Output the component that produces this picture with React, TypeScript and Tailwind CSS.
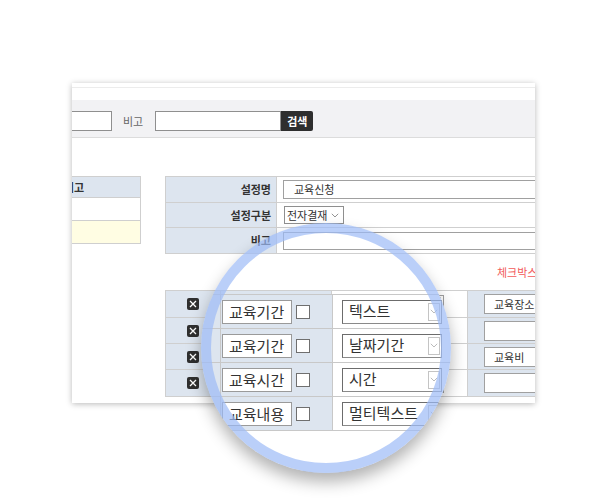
const font = { fontFamily: '"Noto Sans CJK KR", "Noto Sans", sans-serif' }

function XBox() {
  return (
    <span className="w-[12px] h-[12px] rounded-[2px] bg-[#2f2f2f] flex items-center justify-center">
      <svg width="8" height="8" viewBox="0 0 8 8">
        <path d="M1 1L7 7M7 1L1 7" stroke="#fff" strokeWidth="1.3" />
      </svg>
    </span>
  )
}

function Chevron({ size = 8, color = '#777' }: { size?: number; color?: string }) {
  return (
    <svg width={size} height={size * 0.6} viewBox="0 0 10 6">
      <path d="M1 1L5 5L9 1" stroke={color} strokeWidth="1" fill="none" />
    </svg>
  )
}

export default function App() {
  /* original rows under the lens */
  const rows = [
    { h: 'h-[27px]', right: '교육장소' },
    { h: 'h-[26px]', right: '' },
    { h: 'h-[26px]', right: '교육비' },
    { h: 'h-[27px]', right: '' },
  ]

  /* magnified rows */
  const zoomRows = [
    { label: '교육기간', sel: '텍스트' },
    { label: '교육기간', sel: '날짜기간' },
    { label: '교육시간', sel: '시간' },
    { label: '교육내용', sel: '멀티텍스트' },
  ]

  return (
    <div className="w-[600px] h-[500px] bg-white relative overflow-hidden text-[#333]" style={font}>
      {/* screenshot card */}
      <div className="ml-[72px] mt-[83px] w-[463px] h-[320px] bg-white overflow-hidden shadow-[0_1px_6px_rgba(0,0,0,0.28)] flex flex-col">
        <div className="h-[5px] border-b border-[#ececec] shrink-0" />
        <div className="h-[12px] shrink-0" />
        <div className="h-[38px] shrink-0 bg-[#f2f2f4] border-b border-[#dcdcdc] flex items-start pt-[11px] text-[11px]">
          <div className="w-[40px] h-[20px] bg-white border border-l-0 border-[#8f8f8f]" />
          <span className="ml-[11px] leading-[20px] text-[#666]">비고</span>
          <div className="ml-[12px] w-[126px] h-[20px] bg-white border border-[#8f8f8f]" />
          <button className="w-[32px] h-[20px] bg-[#2e2e2e] text-white font-bold text-[11px] leading-[20px] rounded-r-[2px]">
            검색
          </button>
        </div>

        <div className="flex items-start mt-[38px] text-[11px]">
          {/* left table */}
          <div className="w-[69px] border-r border-b border-[#cfcfcf] shrink-0">
            <div className="h-[22px] bg-[#dde5ef] border-t border-b border-[#cfcfcf] flex items-center font-bold overflow-hidden">
              <span className="ml-[-8px] whitespace-nowrap">비고</span>
            </div>
            <div className="h-[23px] bg-white border-b border-[#cfcfcf]" />
            <div className="h-[22px] bg-[#fffde3]" />
          </div>

          {/* right column */}
          <div className="ml-[24px] flex-1 min-w-0">
            <div className="border-t border-l border-[#cfcfcf]">
              <div className="flex h-[26px] border-b border-[#cfcfcf]">
                <div className="w-[111px] bg-[#dde5ef] border-r border-[#cfcfcf] flex items-center justify-end pr-[5px] font-bold">설정명</div>
                <div className="flex-1 flex items-center">
                  <div className="ml-[6px] flex-1 h-[19px] border border-r-0 border-[#a0a0a0] pl-[10px] leading-[17px]">교육신청</div>
                </div>
              </div>
              <div className="flex h-[25px] border-b border-[#cfcfcf]">
                <div className="w-[111px] bg-[#dde5ef] border-r border-[#cfcfcf] flex items-center justify-end pr-[5px] font-bold">설정구분</div>
                <div className="flex-1 flex items-center">
                  <div className="ml-[7px] w-[60px] h-[18px] border border-[#8f8f8f] flex items-center pl-[2px] gap-[4px] text-[11px]">
                    <span>전자결재</span>
                    <Chevron />
                  </div>
                </div>
              </div>
              <div className="flex h-[26px] border-b border-[#cfcfcf]">
                <div className="w-[111px] bg-[#dde5ef] border-r border-[#cfcfcf] flex items-center justify-end pr-[5px] font-bold">비고</div>
                <div className="flex-1 flex items-center">
                  <div className="ml-[6px] flex-1 h-[18px] border border-r-0 border-[#a0a0a0]" />
                </div>
              </div>
            </div>

            <p className="mt-[10px] pl-[332px] leading-[16px] text-[#f25a5a] whitespace-nowrap">체크박스 선택 시 필수 항목으로 설정됩니다.</p>

            <div className="mt-[10px] border-t border-l border-[#cfcfcf]">
              {rows.map((r, i) => (
                <div key={i} className={`flex ${r.h} border-b border-[#cfcfcf]`}>
                  <div className="w-[55px] bg-[#dde5ef] border-r border-[#cfcfcf] flex items-center justify-center pr-[1px]">
                    <XBox />
                  </div>
                  <div className="w-[111px] bg-[#dde5ef] border-r border-[#cfcfcf] flex items-center pl-[20px] gap-[4px]">
                    <div className="w-[56px] h-[19px] bg-white border border-[#a0a0a0]" />
                    <div className="w-[11px] h-[11px] bg-white border border-[#777]" />
                  </div>
                  <div className="w-[136px] bg-white border-r border-[#cfcfcf] flex items-center">
                    <div className="ml-[19px] w-[93px] h-[19px] border border-[#a0a0a0] flex items-center justify-end pr-[2px]">
                      <span className="w-[12px] h-[15px] border border-[#c4c4c4] flex items-center justify-center">
                        <Chevron size={7} color="#999" />
                      </span>
                    </div>
                  </div>
                  <div className="flex-1 bg-[#dde5ef] flex items-center">
                    <div className="ml-[16px] flex-1 h-[20px] bg-white border border-r-0 border-[#a0a0a0] pl-[9px] leading-[18px] whitespace-nowrap">
                      {r.right}
                    </div>
                  </div>
                </div>
              ))}
            </div>
          </div>
        </div>
      </div>

      {/* magnifier contents */}
      <div className="absolute left-[201px] top-[223px] w-[250px] h-[250px] rounded-full overflow-hidden flex flex-col">
        <div className="h-[71px] shrink-0" />
        <div className="border-t border-[#c8c8c8] shrink-0">
          {zoomRows.map((r, i) => (
            <div key={i} className="flex h-[34px] border-b border-[#c8c8c8]">
              <div className="w-[132px] bg-[#dde5ef] border-r border-[#c8c8c8] flex items-center">
                <div className="w-[20px] h-full border-r border-[#c8c8c8]" />
                <div className="ml-[1px] w-[70px] h-[24px] bg-white border border-[#9a9a9a] pl-[6px] text-[15px] leading-[22px] whitespace-nowrap">
                  {r.label}
                </div>
                <div className="ml-[4px] w-[14px] h-[14px] bg-white border border-[#6f6f6f]" />
              </div>
              <div className="flex-1 bg-white flex items-center">
                <div className="ml-[9px] w-[100px] h-[24px] border border-[#8a8a8a] border-t-[#6c6c6c] border-l-[#6c6c6c] flex items-center pl-[6px] pr-[1px] text-[15px] whitespace-nowrap">
                  <span className="flex-1">{r.sel}</span>
                  <span className="w-[12px] h-[18px] border border-[#c4c4c4] flex items-center justify-center">
                    <Chevron size={8} color="#aaa" />
                  </span>
                </div>
              </div>
            </div>
          ))}
        </div>
        <div className="flex-1 bg-white" />
      </div>

      {/* magnifier ring */}
      <div className="absolute left-[201px] top-[223px] w-[250px] h-[250px] rounded-full border-[10px] border-[#9dbaf6]/70 shadow-[0_9px_16px_rgba(0,0,0,0.3)]" />
    </div>
  )
}
